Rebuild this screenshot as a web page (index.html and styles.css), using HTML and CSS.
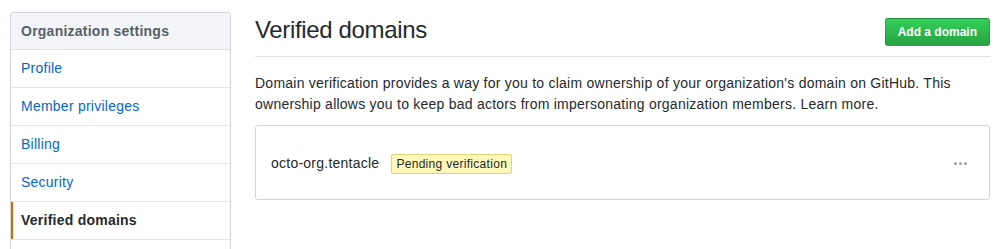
FILE: index.html
```html
<!DOCTYPE html>
<html lang="en">
<head>
<meta charset="utf-8">
<title>Verified domains</title>
<link rel="stylesheet" href="styles.css">
</head>
<body>
<div class="layout">
  <nav class="menu">
    <div class="menu-heading">Organization settings</div>
    <a class="menu-item" href="#">Profile</a>
    <a class="menu-item" href="#">Member privileges</a>
    <a class="menu-item" href="#">Billing</a>
    <a class="menu-item" href="#">Security</a>
    <a class="menu-item selected" href="#">Verified domains</a>
    <div class="menu-filler"></div>
  </nav>
  <main class="main">
    <div class="subhead">
      <h2 class="subhead-heading">Verified domains</h2>
      <button class="btn-primary" type="button">Add a domain</button>
    </div>
    <p class="intro">Domain verification provides a way for you to claim ownership of your organization's domain on GitHub. This ownership allows you to keep bad actors from impersonating organization members. Learn more.</p>
    <div class="box">
      <div class="box-row">
        <span class="domain">octo-org.tentacle</span>
        <span class="label">Pending verification</span>
        <span class="spacer"></span>
        <button class="kebab" type="button" aria-label="More">
          <svg width="13" height="16" viewBox="0 0 13 16" aria-hidden="true"><path fill="currentColor" d="M1.5 9a1.5 1.5 0 1 0 0-3 1.5 1.5 0 0 0 0 3zm5 0a1.5 1.5 0 1 0 0-3 1.5 1.5 0 0 0 0 3zM13 7.5a1.5 1.5 0 1 1-3 0 1.5 1.5 0 0 1 3 0z"/></svg>
        </button>
      </div>
    </div>
  </main>
</div>
</body>
</html>
```
FILE: styles.css
```css
html, body {
  margin: 0;
  height: 100%;
  overflow: hidden;
  background: #fff;
}
body {
  font-family: "Liberation Sans", Arial, sans-serif;
  font-size: 14px;
  line-height: 1.5;
  letter-spacing: 0.24px;
  color: #24292e;
}
.layout {
  display: flex;
  gap: 24px;
  padding: 12px 14px 0 10px;
}
.menu {
  width: 219px;
  flex: none;
  border: 1px solid #d1d5da;
  border-radius: 3px;
  display: flex;
  flex-direction: column;
  align-self: flex-start;
}
.menu-heading {
  padding: 8px 10px;
  line-height: 20px;
  font-weight: bold;
  color: #586069;
  background: #f3f5f8;
  border-bottom: 1px solid #e1e4e8;
  border-radius: 3px 3px 0 0;
}
.menu-item {
  position: relative;
  display: block;
  padding: 8px 10px;
  color: #0366d6;
  text-decoration: none;
  border-bottom: 1px solid #e1e4e8;
}
.menu-item.selected {
  color: #24292e;
  font-weight: bold;
}
.menu-item.selected::before {
  content: "";
  position: absolute;
  top: 0;
  bottom: 0;
  left: 0;
  width: 2px;
  background: #e36209;
}
.menu-filler {
  height: 30px;
}
.main {
  flex: 1;
  min-width: 0;
}
.subhead {
  display: flex;
  align-items: flex-start;
  padding-bottom: 8px;
  margin-bottom: 16px;
  border-bottom: 1px solid #e1e4e8;
}
.subhead-heading {
  flex: 1;
  margin: 0;
  font-size: 24px;
  font-weight: normal;
  line-height: 36px;
  letter-spacing: -0.35px;
}
.btn-primary {
  margin-top: 6px;
  padding: 3px 12px;
  font-family: inherit;
  font-size: 12px;
  font-weight: bold;
  line-height: 20px;
  letter-spacing: 0;
  color: #fff;
  background: linear-gradient(-180deg, #34d058 0%, #28a745 90%);
  border: 1px solid rgba(27, 31, 35, 0.2);
  border-radius: 3px;
}
.intro {
  margin: 0 0 10px;
  line-height: 21px;
}
.box {
  border: 1px solid #d1d5da;
  border-radius: 3px;
}
.box-row {
  display: flex;
  align-items: center;
  min-height: 41px;
  padding: 17px 15px 15px;
}
.domain {
  margin-right: 12px;
}
.label {
  display: inline-block;
  padding: 0 4px;
  font-size: 12px;
  line-height: 18px;
  letter-spacing: 0.3px;
  color: #24292e;
  background: #fff8b8;
  border: 1px solid #e2d47a;
  border-radius: 2px;
}
.spacer {
  flex: 1;
}
.kebab {
  display: flex;
  padding: 0;
  margin-right: 7px;
  color: #959da5;
  background: none;
  border: 0;
}
```
